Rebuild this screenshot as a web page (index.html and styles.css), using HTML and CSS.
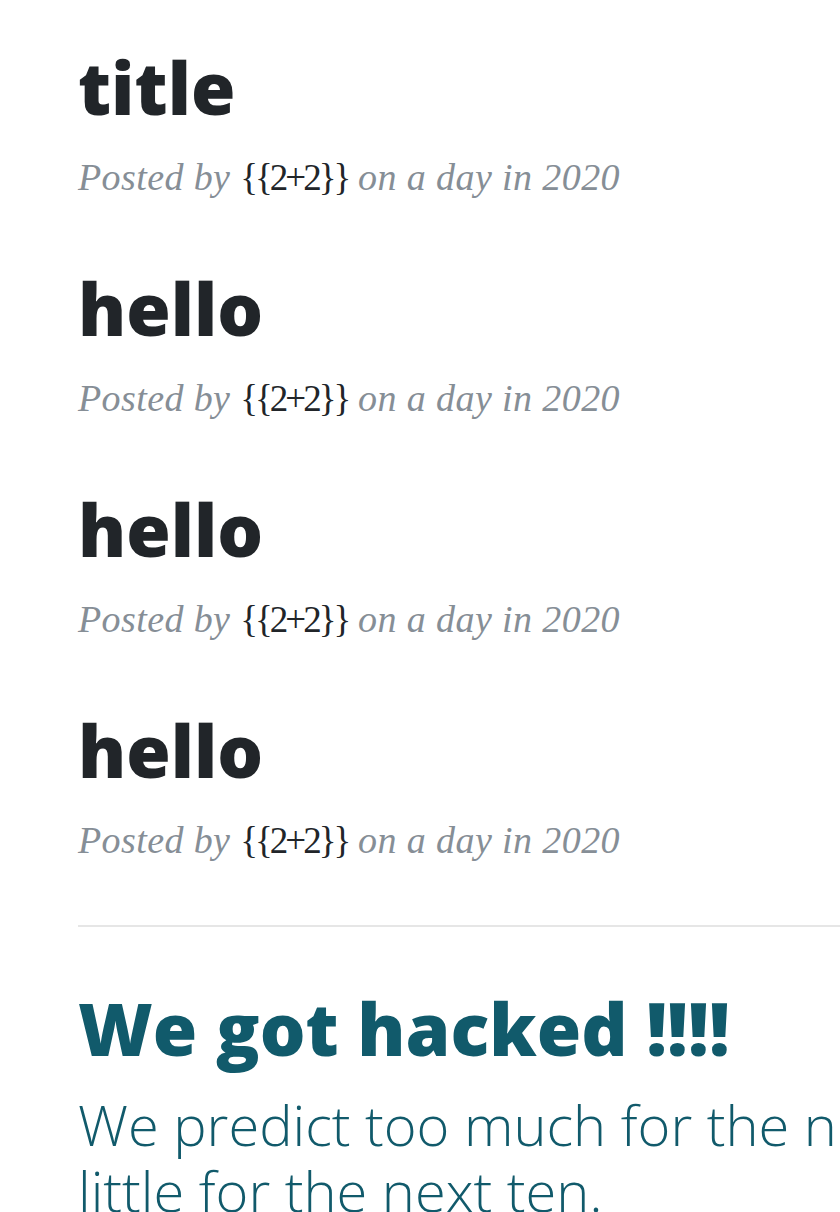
FILE: index.html
```html
<!DOCTYPE html>
<html lang="en">
<head>
<meta charset="utf-8">
<title>Blog</title>
<link rel="stylesheet" href="styles.css">
</head>
<body>
<main class="container">
  <section class="post-list">
    <article class="post-preview">
      <h2 class="post-title">title</h2>
      <p class="post-meta">Posted by <span class="author">{{2+2}}</span> on a day in 2020</p>
    </article>
    <article class="post-preview">
      <h2 class="post-title">hello</h2>
      <p class="post-meta">Posted by <span class="author">{{2+2}}</span> on a day in 2020</p>
    </article>
    <article class="post-preview">
      <h2 class="post-title">hello</h2>
      <p class="post-meta">Posted by <span class="author">{{2+2}}</span> on a day in 2020</p>
    </article>
    <article class="post-preview">
      <h2 class="post-title">hello</h2>
      <p class="post-meta">Posted by <span class="author">{{2+2}}</span> on a day in 2020</p>
    </article>
  </section>
  <hr class="divider">
  <section class="hacked">
    <h1 class="hacked-title">We got hacked !!!!</h1>
    <p class="hacked-text">We predict too much for the next year and yet far too<br>little for the next ten.</p>
  </section>
</main>
</body>
</html>
```

FILE: styles.css
```css
html, body {
  margin: 0;
  padding: 0;
  background: #fff;
  overflow: hidden;
}
body {
  width: 840px;
  height: 1212px;
}
.container {
  padding-left: 78px;
  padding-top: 44px;
  width: 1600px;
}
.post-list {
  display: flex;
  flex-direction: column;
  gap: 67px;
}
.post-title {
  margin: 0;
  font-family: "Open Sans", sans-serif;
  font-weight: 800;
  font-size: 72px;
  line-height: 86px;
  color: #212529;
}
.post-meta {
  margin: 27px 0 0;
  font-family: "Liberation Serif", serif;
  font-style: italic;
  font-size: 38px;
  line-height: 40px;
  letter-spacing: 0.4px;
  color: #868e96;
}
.author {
  font-style: normal;
  font-size: 37px;
  letter-spacing: -3px;
  color: #212529;
}
.divider {
  margin: 64px 0 0;
  border: 0;
  border-top: 2px solid #e6e6e6;
}
.hacked-title {
  margin: 58px 0 0;
  font-family: "Open Sans", sans-serif;
  font-weight: 800;
  font-size: 72px;
  line-height: 86px;
  color: #115a6b;
}
.hacked-text {
  margin: 20px 0 0;
  font-family: "Open Sans", sans-serif;
  font-weight: 300;
  font-size: 56px;
  line-height: 66px;
  color: #115a6b;
}
```
